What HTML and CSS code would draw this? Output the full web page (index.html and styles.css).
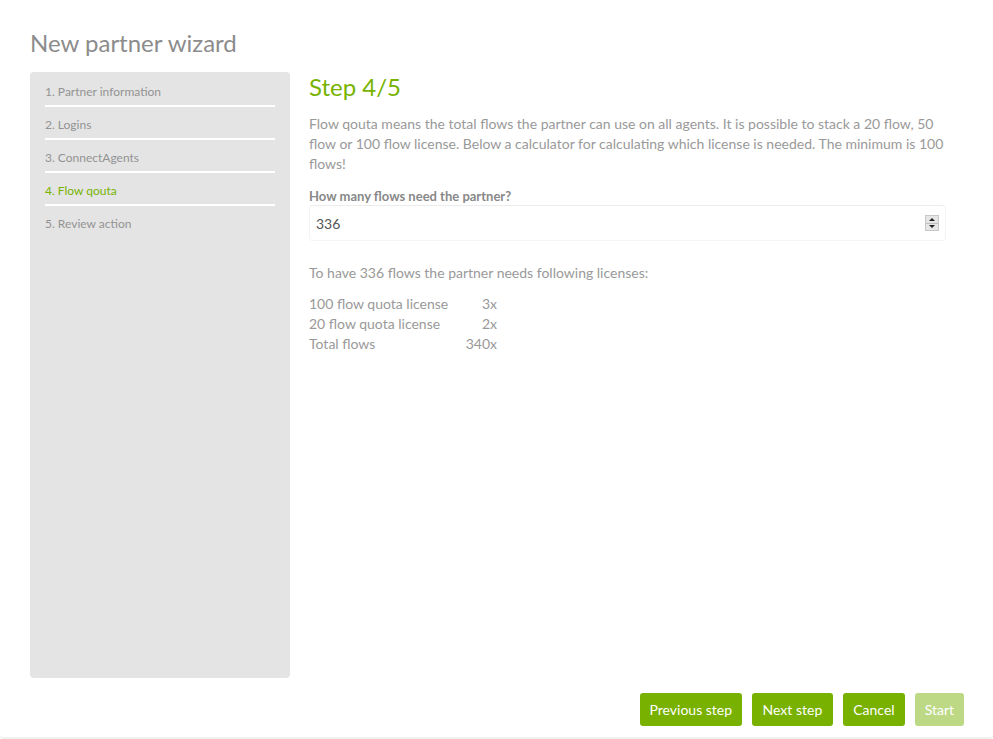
FILE: index.html
```html
<!DOCTYPE html>
<html>
<head>
<meta charset="utf-8">
<link rel="stylesheet" href="styles.css">
</head>
<body>
<div class="modal">
  <h1 class="title">New partner wizard</h1>
  <div class="body">
    <ul class="steps">
      <li class="step">1. Partner information</li>
      <li class="step">2. Logins</li>
      <li class="step">3. ConnectAgents</li>
      <li class="step active">4. Flow qouta</li>
      <li class="step last">5. Review action</li>
    </ul>
    <div class="content">
      <h2 class="heading">Step 4/5</h2>
      <p class="desc">Flow qouta means the total flows the partner can use on all agents. It is possible to stack a 20 flow, 50 flow or 100 flow license. Below a calculator for calculating which license is needed. The minimum is 100 flows!</p>
      <label class="label">How many flows need the partner?</label>
      <div class="field">
        <span class="value">336</span>
        <span class="spinner"><span class="up"></span><span class="down"></span></span>
      </div>
      <p class="result">To have 336 flows the partner needs following licenses:</p>
      <div class="table">
        <span>100 flow quota license</span><span class="num">3x</span>
        <span>20 flow quota license</span><span class="num">2x</span>
        <span>Total flows</span><span class="num">340x</span>
      </div>
    </div>
  </div>
  <div class="footer">
    <button class="btn prev">Previous step</button>
    <button class="btn next">Next step</button>
    <button class="btn">Cancel</button>
    <button class="btn disabled">Start</button>
  </div>
</div>
</body>
</html>
```
FILE: styles.css
```css
* { box-sizing: border-box; }
html, body { margin: 0; padding: 0; background: #fff; }
body { font-family: Lato, "Open Sans", sans-serif; color: #999; }
.modal {
  width: 993px;
  height: 739px;
  padding: 28px 29px 0 30px;
  border-bottom: 2px solid #f0f0f0;
  border-radius: 0 0 4px 4px;
}
.title {
  margin: 0 0 14px;
  font-size: 24px;
  line-height: 30px;
  font-weight: 400;
  color: #8c8c8c;
}
.body { display: flex; gap: 19px; height: 606px; }
.steps {
  list-style: none;
  margin: 0;
  width: 260px;
  flex: none;
  background: #e4e4e4;
  border-radius: 4px;
  padding: 2px 15px 0;
}
.step {
  font-size: 12px;
  line-height: 16px;
  padding: 10px 0 5px;
  border-bottom: 2px solid #fff;
  color: #939393;
}
.step.last { border-bottom: none; }
.step.active { color: #77b300; }
.content { width: 637px; }
.heading {
  margin: 0;
  font-size: 24px;
  line-height: 29px;
  font-weight: 400;
  color: #77b300;
}
.desc {
  margin: 13px 0 0;
  font-size: 14px;
  line-height: 20px;
  color: #999;
}
.label {
  display: block;
  margin-top: 13px;
  font-size: 13px;
  line-height: 18px;
  font-weight: 700;
  color: #888;
}
.field {
  display: flex;
  align-items: center;
  justify-content: space-between;
  height: 36px;
  border: 1px solid #f4f4f4;
  border-top-color: #ececec;
  border-radius: 4px;
  padding: 0 6px 0 6px;
}
.value { font-size: 14px; color: #555; }
.spinner {
  display: flex;
  flex-direction: column;
  width: 14px;
  height: 16px;
  border: 1px solid #c8c8c8;
  background: #e6e6e6;
}
.up, .down {
  flex: 1;
  display: flex;
  align-items: center;
  justify-content: center;
}
.up { border-bottom: 1px solid #bdbdbd; }
.up::after {
  content: "";
  border-left: 3px solid transparent;
  border-right: 3px solid transparent;
  border-bottom: 3px solid #222;
}
.down::after {
  content: "";
  border-left: 3px solid transparent;
  border-right: 3px solid transparent;
  border-top: 3px solid #222;
}
.result {
  margin: 22px 0 0;
  font-size: 14px;
  line-height: 20px;
  color: #999;
}
.table {
  margin-top: 11px;
  display: grid;
  grid-template-columns: 1fr auto;
  width: 188px;
  font-size: 14px;
  line-height: 20px;
  color: #999;
}
.num { text-align: right; }
.footer {
  display: flex;
  justify-content: flex-end;
  gap: 10px;
  margin-top: 15px;
}
.btn {
  height: 33px;
  padding: 0 10px;
  border: none;
  border-radius: 3px;
  background: #78b100;
  color: #fff;
  font-family: Lato, "Open Sans", sans-serif;
  font-size: 14px;
}
.btn.prev { padding: 0 9.5px; }
.btn.next { padding: 0 11px; }
.btn.disabled { background: #bdd985; }
```
